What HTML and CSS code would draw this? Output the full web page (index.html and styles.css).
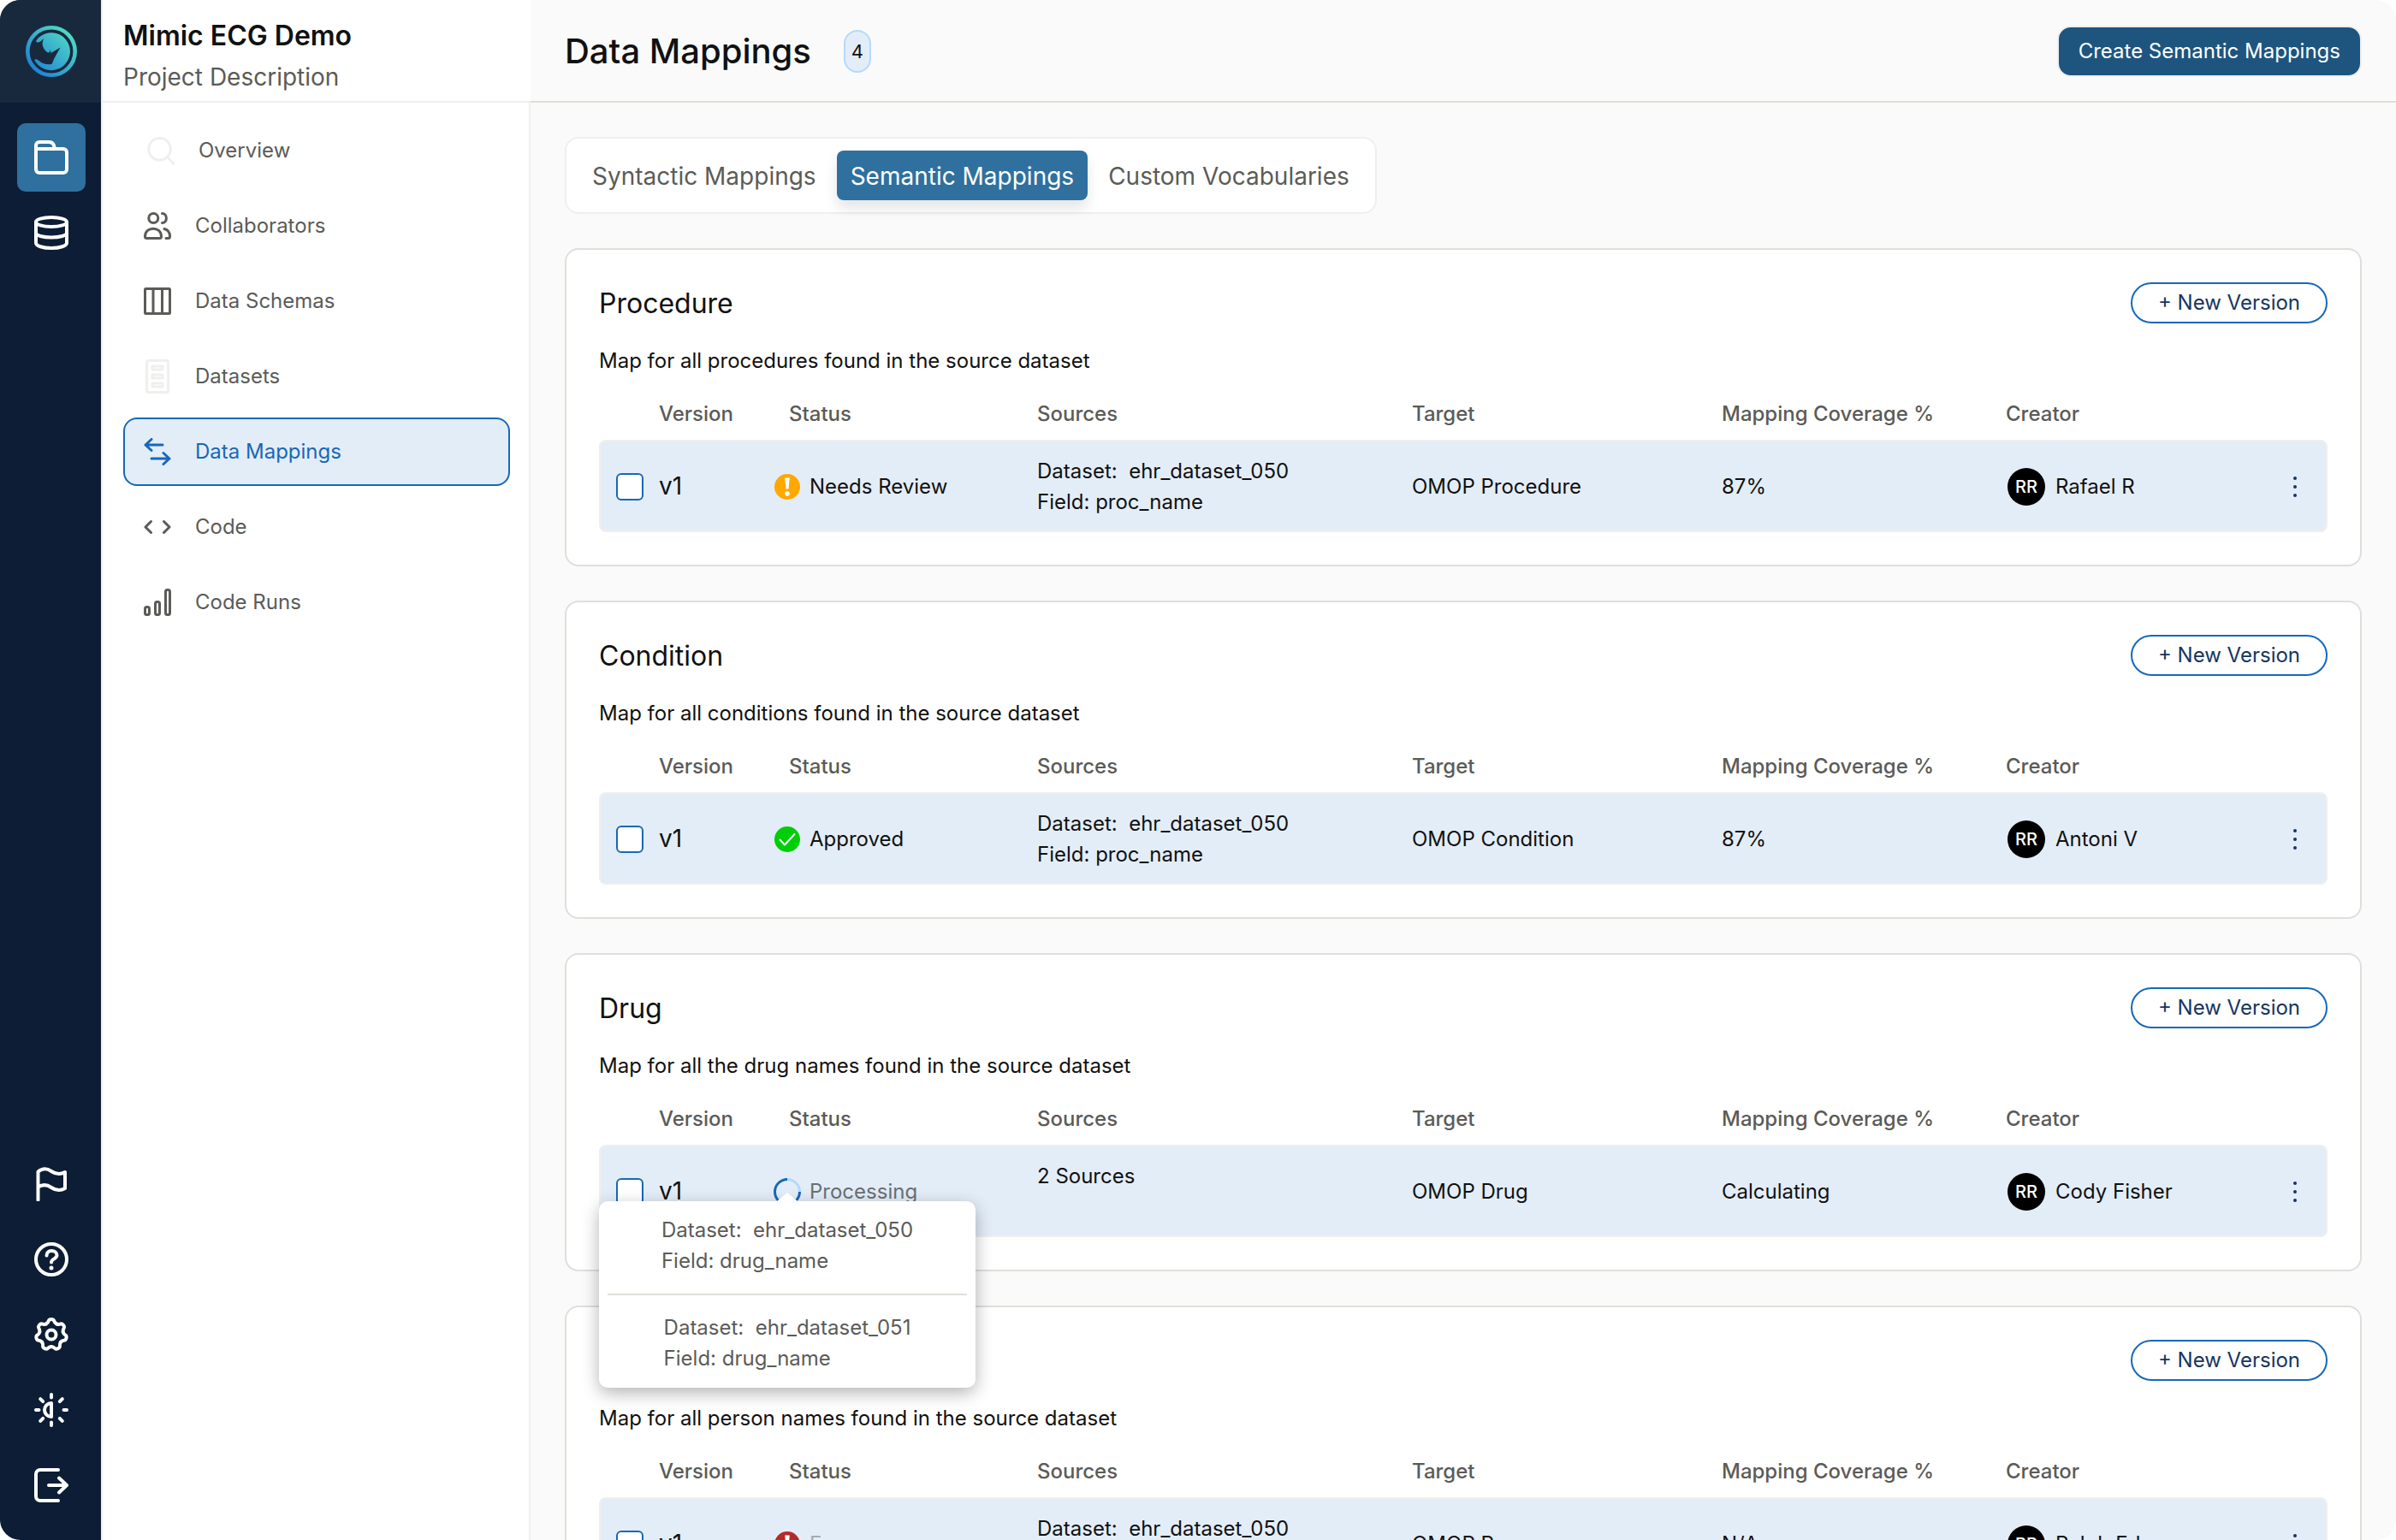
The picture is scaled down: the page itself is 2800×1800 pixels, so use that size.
FILE: index.html
```html
<!DOCTYPE html>
<html lang="en">
<head>
  <meta charset="UTF-8">
  <meta name="viewport" content="width=device-width, initial-scale=1.0">
  <title>Data Mappings</title>
  <link rel="stylesheet" href="styles.css">
</head>
<body>
<!-- shared icons -->
<svg class="sprite" aria-hidden="true">
  <symbol id="icon-dots" viewBox="0 0 32 32">
    <circle cx="16" cy="6" r="2" />
    <circle cx="16" cy="16" r="2" />
    <circle cx="16" cy="26" r="2" />
  </symbol>
</svg>

<div class="app">
  <nav class="rail" aria-label="Main">
    <div class="rail-logo">
      <svg width="60" height="60" viewBox="0 0 60 60">
        <defs>
          <linearGradient id="logo-gradient" x1="8" y1="52" x2="50" y2="8" gradientUnits="userSpaceOnUse">
            <stop offset="0" stop-color="#1f82d6" />
            <stop offset="1" stop-color="#50d8c2" />
          </linearGradient>
        </defs>
        <circle cx="30" cy="30" r="27.7" fill="none" stroke="url(#logo-gradient)" stroke-width="4.6" />
        <path fill="url(#logo-gradient)" d="M12 18 15 14A22 22 0 1 1 11.5 42.2Q9.500 39.500 11.500 39.200Q13.500 39 15.500 41Q22 46.500 30.500 45Q32 42 33 39L40.500 25.500 29.500 32 29 28Q28 32 26 31.500Q20 28 19.500 21L20.700 15Q18 19 15 19.500Q12.500 20 12 18Z" />
      </svg>
    </div>
    <div class="rail-group">
      <a class="rail-item active" href="#projects" aria-label="Projects">
        <svg viewBox="0 0 40 40">
          <path d="M2 12V6a4 4 0 0 1 4-4h11c3 0 5 1 6 4l1 4" />
          <path d="M2 10h32a4 4 0 0 1 4 4v20a4 4 0 0 1-4 4H6a4 4 0 0 1-4-4z" />
        </svg>
      </a>
      <a class="rail-item" href="#databases" aria-label="Databases">
        <svg viewBox="0 0 40 40">
          <ellipse cx="20" cy="7.500" rx="18" ry="5.500" />
          <path d="M2 8v24c0 3.300 8 6 18 6s18-2.700 18-6V8" />
          <path d="M2 20c0 3.300 8 5.500 18 5.500s18-2.200 18-5.500" />
        </svg>
      </a>
    </div>
    <div class="rail-group rail-bottom">
      <a class="rail-item" href="#flags" aria-label="Flags">
        <svg viewBox="0 0 40 40">
          <path d="M4.500 38.500V5.500C10 1 15 1.500 20 5s10 4.500 16 1v19c-6 3.500-11 2.500-16-1s-10-4-15.500-.5" />
        </svg>
      </a>
      <a class="rail-item" href="#help" aria-label="Help">
        <svg viewBox="0 0 40 40">
          <circle cx="20" cy="20" r="18" />
          <path d="M14.500 15.500c0-3.500 2.500-5.500 5.700-5.500s6.300 1.800 6.300 5.300c0 4.200-6.500 4-6.500 8.200" />
          <circle class="solid" cx="20" cy="30" r="2.500" />
        </svg>
      </a>
      <a class="rail-item" href="#settings" aria-label="Settings">
        <svg viewBox="0 0 40 40">
          <path id="tooth" d="M13.900 7.400C16 6.400 16.500 5 17 3.500 17.800 1.600 22.200 1.600 23 3.500 23.500 5 24 6.400 26.100 7.400" />
          <use href="#tooth" transform="rotate(51.430 20 20)" />
          <use href="#tooth" transform="rotate(102.860 20 20)" />
          <use href="#tooth" transform="rotate(154.290 20 20)" />
          <use href="#tooth" transform="rotate(205.710 20 20)" />
          <use href="#tooth" transform="rotate(257.140 20 20)" />
          <use href="#tooth" transform="rotate(308.570 20 20)" />
          <circle cx="20" cy="20" r="5.500" />
        </svg>
      </a>
      <a class="rail-item" href="#theme" aria-label="Theme">
        <svg viewBox="0 0 40 40">
          <path d="M20 12a8 8 0 0 0 0 16z" />
          <path d="M20 2v3.500M20 34.500V38M2 20h3.500M34.500 20H38M7.200 7.200l3 3M32.800 7.200l-3 3M7.200 32.800l3-3M32.800 32.800l-3-3" />
        </svg>
      </a>
      <a class="rail-item" href="#logout" aria-label="Log out">
        <svg viewBox="0 0 40 40">
          <path d="M28 2H7a5 5 0 0 0-5 5v26a5 5 0 0 0 5 5h21M17 20h20M29 11.500l9 8.500-9 8.500" />
        </svg>
      </a>
    </div>
  </nav>

  <aside class="sidebar">
    <div class="project">
      <div class="project-name">Mimic ECG Demo</div>
      <div class="project-desc">Project Description</div>
    </div>
    <nav class="menu" aria-label="Project">
      <a class="menu-item" href="#overview">
        <svg class="faded" width="36" height="36" viewBox="0 0 36 36"><circle cx="18.500" cy="16.300" r="12.800" /><path d="M28 26l7 7.500" /></svg>
        Overview
      </a>
      <a class="menu-item" href="#collaborators">
        <svg width="32" height="32" viewBox="0 0 32 32">
          <circle cx="11.300" cy="7" r="5.500" />
          <path d="M1.500 28.500C1.500 16 20.500 16 20.500 28.500a2 2 0 0 1-2 2h-15a2 2 0 0 1-2-2z" />
          <path d="M21.500 1.500c6.500 0 6.500 11 0 11M24 19.500c4.500 1 6.500 5 6.500 9 0 1.500-1 2-2 2H26" />
        </svg>
        Collaborators
      </a>
      <a class="menu-item" href="#schemas">
        <svg width="32" height="32" viewBox="0 0 32 32"><rect x="1.500" y="1.500" width="29" height="29" rx="1" /><path d="M11 2v28M21.500 2v28" /></svg>
        Data Schemas
      </a>
      <a class="menu-item" href="#datasets">
        <svg class="faded" width="32" height="40" viewBox="0 0 32 40"><rect x="3.500" y="1.500" width="25" height="37" rx="2" /><path d="M10 8h12v4H10zM10 18h12v4H10zM10 28h12v4H10z" /></svg>
        Datasets
      </a>
      <a class="menu-item active" href="#mappings" aria-current="page">
        <svg width="32" height="32" viewBox="0 0 32 32"><path d="M22 8H2M9 1.500L2 8l7 6.500M9 24h21M23 17.500l7 6.500-7 6.500" /></svg>
        Data Mappings
      </a>
      <a class="menu-item" href="#code">
        <svg width="32" height="32" viewBox="0 0 32 32"><path d="M8.500 9.500L2 16l6.500 6.500M23.500 9.500L30 16l-6.500 6.500" /></svg>
        Code
      </a>
      <a class="menu-item" href="#runs">
        <svg width="32" height="32" viewBox="0 0 32 32"><rect x="1.500" y="21.500" width="5" height="9" rx="2" /><rect x="13.500" y="15.500" width="5" height="15" rx="2" /><rect x="25.500" y="1.500" width="5" height="29" rx="2" /></svg>
        Code Runs
      </a>
    </nav>
  </aside>

  <main class="main">
    <header class="topbar">
      <h1>Data Mappings</h1>
      <span class="count">4</span>
      <button class="create-btn" type="button">Create Semantic Mappings</button>
    </header>

    <div class="content">
      <div class="tabs" role="tablist">
        <button class="tab" type="button" role="tab">Syntactic Mappings</button>
        <button class="tab active" type="button" role="tab" aria-selected="true">Semantic Mappings</button>
        <button class="tab" type="button" role="tab">Custom Vocabularies</button>
      </div>

      <section class="card">
        <div class="card-head">
          <h2>Procedure</h2>
          <button class="version-btn" type="button">+ New Version</button>
        </div>
        <p>Map for all procedures found in the source dataset</p>
        <table>
          <colgroup><col class="c-check"><col class="c-version"><col class="c-status"><col class="c-sources"><col class="c-target"><col class="c-coverage"><col class="c-creator"><col class="c-more"></colgroup>
          <thead>
            <tr><th></th><th>Version</th><th class="th-status">Status</th><th>Sources</th><th>Target</th><th>Mapping Coverage %</th><th>Creator</th><th></th></tr>
          </thead>
          <tbody>
            <tr>
              <td class="cell-check"><input type="checkbox" id="procedure-v1"></td>
              <td><label class="version" for="procedure-v1">v1</label></td>
              <td>
                <div class="status">
                  <svg viewBox="0 0 32 32"><circle cx="16" cy="16" r="15" fill="#ffa800" /><path fill="#fff" d="M13.200 5.500h5.600l-1.300 13h-3z" /><circle cx="16" cy="24" r="2.800" fill="#fff" /></svg>
                  Needs Review
                </div>
              </td>
              <td><div class="sources">Dataset:&nbsp; ehr_dataset_050<br>Field: proc_name</div></td>
              <td>OMOP Procedure</td>
              <td>87%</td>
              <td><div class="creator"><span class="avatar">RR</span>Rafael R</div></td>
              <td class="cell-more"><button class="more" type="button" aria-label="More"><svg><use href="#icon-dots" /></svg></button></td>
            </tr>
          </tbody>
        </table>
      </section>

      <section class="card">
        <div class="card-head">
          <h2>Condition</h2>
          <button class="version-btn" type="button">+ New Version</button>
        </div>
        <p>Map for all conditions found in the source dataset</p>
        <table>
          <colgroup><col class="c-check"><col class="c-version"><col class="c-status"><col class="c-sources"><col class="c-target"><col class="c-coverage"><col class="c-creator"><col class="c-more"></colgroup>
          <thead>
            <tr><th></th><th>Version</th><th class="th-status">Status</th><th>Sources</th><th>Target</th><th>Mapping Coverage %</th><th>Creator</th><th></th></tr>
          </thead>
          <tbody>
            <tr>
              <td class="cell-check"><input type="checkbox" id="condition-v1"></td>
              <td><label class="version" for="condition-v1">v1</label></td>
              <td>
                <div class="status">
                  <svg viewBox="0 0 32 32"><circle cx="16" cy="16" r="15" fill="#00ce07" /><path fill="none" stroke="#fff" stroke-width="2" stroke-linecap="round" stroke-linejoin="round" d="M7.500 16.500l5.500 6L24.500 10" /></svg>
                  Approved
                </div>
              </td>
              <td><div class="sources">Dataset:&nbsp; ehr_dataset_050<br>Field: proc_name</div></td>
              <td>OMOP Condition</td>
              <td>87%</td>
              <td><div class="creator"><span class="avatar">RR</span>Antoni V</div></td>
              <td class="cell-more"><button class="more" type="button" aria-label="More"><svg><use href="#icon-dots" /></svg></button></td>
            </tr>
          </tbody>
        </table>
      </section>

      <section class="card">
        <div class="card-head">
          <h2>Drug</h2>
          <button class="version-btn" type="button">+ New Version</button>
        </div>
        <p>Map for all the drug names found in the source dataset</p>
        <table>
          <colgroup><col class="c-check"><col class="c-version"><col class="c-status"><col class="c-sources"><col class="c-target"><col class="c-coverage"><col class="c-creator"><col class="c-more"></colgroup>
          <thead>
            <tr><th></th><th>Version</th><th class="th-status">Status</th><th>Sources</th><th>Target</th><th>Mapping Coverage %</th><th>Creator</th><th></th></tr>
          </thead>
          <tbody>
            <tr>
              <td class="cell-check"><input type="checkbox" id="drug-v1"></td>
              <td><label class="version" for="drug-v1">v1</label></td>
              <td class="has-popover">
                <div class="status processing">
                  <svg viewBox="0 0 32 32" fill="none" stroke-width="3"><path stroke="#b3d9ff" d="M16 1.500A14.500 14.500 0 0 1 30.500 16" /><path stroke="#1768b8" d="M30.500 16A14.500 14.500 0 1 1 16 1.500" /></svg>
                  Processing
                </div>
                <div class="popover">
                  <div class="popover-item"><span>Dataset:&nbsp; ehr_dataset_050<br>Field: drug_name</span></div>
                  <div class="popover-item"><span>Dataset:&nbsp; ehr_dataset_051<br>Field: drug_name</span></div>
                </div>
              </td>
              <td><div class="sources">2 Sources</div></td>
              <td>OMOP Drug</td>
              <td>Calculating</td>
              <td><div class="creator"><span class="avatar">RR</span>Cody Fisher</div></td>
              <td class="cell-more"><button class="more" type="button" aria-label="More"><svg><use href="#icon-dots" /></svg></button></td>
            </tr>
          </tbody>
        </table>
      </section>

      <section class="card">
        <div class="card-head">
          <h2>Person</h2>
          <button class="version-btn" type="button">+ New Version</button>
        </div>
        <p>Map for all person names found in the source dataset</p>
        <table>
          <colgroup><col class="c-check"><col class="c-version"><col class="c-status"><col class="c-sources"><col class="c-target"><col class="c-coverage"><col class="c-creator"><col class="c-more"></colgroup>
          <thead>
            <tr><th></th><th>Version</th><th class="th-status">Status</th><th>Sources</th><th>Target</th><th>Mapping Coverage %</th><th>Creator</th><th></th></tr>
          </thead>
          <tbody>
            <tr>
              <td class="cell-check"><input type="checkbox" id="person-v1"></td>
              <td><label class="version" for="person-v1">v1</label></td>
              <td>
                <div class="status error">
                  <svg viewBox="0 0 32 32"><circle cx="16" cy="16" r="15" fill="#b62a2a" /><path fill="#fff" d="M13.200 5.500h5.600l-1.300 13h-3z" /><circle cx="16" cy="24" r="2.800" fill="#fff" /></svg>
                  Error
                </div>
              </td>
              <td><div class="sources">Dataset:&nbsp; ehr_dataset_050<br>Field: person_name</div></td>
              <td>OMOP Person</td>
              <td>N/A</td>
              <td><div class="creator"><span class="avatar">RR</span>Ralph Edwa...</div></td>
              <td class="cell-more"><button class="more" type="button" aria-label="More"><svg><use href="#icon-dots" /></svg></button></td>
            </tr>
          </tbody>
        </table>
      </section>
    </div>
  </main>
</div>
</body>
</html>
```

FILE: styles.css
```css
* {
  box-sizing: border-box;
}

body {
  margin: 0;
  background: #ffffff;
  color: #111111;
  font-family: Inter, "Liberation Sans", sans-serif;
  font-size: 24px;
  line-height: 36px;
}

button {
  font: inherit;
  cursor: pointer;
}

a {
  color: inherit;
  text-decoration: none;
}

svg {
  display: block;
  flex-shrink: 0;
}

.sprite {
  display: none;
}

.app {
  display: flex;
  height: 100vh;
  overflow: hidden;
  border-radius: 24px;
  background: #fafafa;
}

/* Icon rail */

.rail {
  display: flex;
  flex-direction: column;
  flex-shrink: 0;
  width: 120px;
  border-right: 2px solid #efefed;
  background: #0c1d35;
}

.rail-logo {
  height: 120px;
  padding: 30px;
  background: #18293e;
}

.rail-group {
  display: flex;
  flex-direction: column;
  gap: 8px;
  padding: 24px 0 24px 20px;
}

.rail-bottom {
  margin-top: auto;
}

.rail-item {
  display: flex;
  align-items: center;
  justify-content: center;
  width: 80px;
  height: 80px;
  border-radius: 10px;
}

.rail-item.active {
  background: #2f709e;
}

.rail-item svg {
  width: 40px;
  height: 40px;
  fill: none;
  stroke: #ffffff;
  stroke-width: 4;
  stroke-linecap: round;
  stroke-linejoin: round;
}

.rail-item .solid {
  fill: #ffffff;
  stroke: none;
}

/* Project sidebar */

.sidebar {
  flex-shrink: 0;
  width: 500px;
  background: #ffffff;
}

.project {
  height: 120px;
  padding: 18px 24px 0;
  border-bottom: 2px solid #efefed;
}

.project-name {
  font-size: 32px;
  font-weight: 600;
  line-height: 48px;
}

.project-desc {
  color: #5b5b58;
  font-size: 28px;
  line-height: 48px;
}

.menu {
  display: flex;
  flex-direction: column;
  gap: 8px;
  height: calc(100% - 120px);
  padding: 16px 22px 16px 24px;
  border-right: 2px solid #efefed;
}

.menu-item {
  display: flex;
  align-items: center;
  gap: 28px;
  height: 80px;
  padding: 0 22px;
  border: 2px solid transparent;
  border-radius: 16px;
  color: #5b5b58;
}

.menu-item svg {
  fill: none;
  stroke: currentColor;
  stroke-width: 3;
  stroke-linecap: round;
  stroke-linejoin: round;
}

.menu-item svg.faded {
  stroke: #efefed;
}

.menu-item.active {
  border-color: #1768b8;
  background: #e3edf8;
  color: #1768b8;
}

/* Main area */

.main {
  display: flex;
  flex: 1;
  flex-direction: column;
  min-width: 0;
}

.topbar {
  display: flex;
  align-items: center;
  flex-shrink: 0;
  height: 120px;
  padding: 2px 40px 0;
  border-bottom: 2px solid #dfdfda;
}

h1 {
  margin: 0;
  font-size: 40px;
  font-weight: 500;
  line-height: 48px;
}

.count {
  margin-left: 38px;
  width: 32px;
  border: 2px solid #b3d9ff;
  border-radius: 16px;
  background: #e3edf8;
  font-size: 22px;
  line-height: 46px;
  text-align: center;
}

.create-btn {
  height: 60px;
  margin-left: auto;
  padding: 0 23px;
  border: 2px solid #efefed;
  border-radius: 16px;
  background: #1d557f;
  color: #ffffff;
}

.content {
  display: flex;
  flex: 1;
  flex-direction: column;
  gap: 40px;
  min-height: 0;
  padding: 40px;
  overflow-y: auto;
  scrollbar-width: none;
}

.tabs {
  display: flex;
  flex-shrink: 0;
  align-self: flex-start;
  gap: 8px;
  padding: 14px;
  border: 2px solid #efefed;
  border-radius: 16px;
  background: #ffffff;
}

.tab {
  height: 58px;
  padding: 2px 16px 0;
  border: none;
  border-radius: 8px;
  background: none;
  color: #5b5b58;
  font-size: 28px;
}

.tab.active {
  background: #2f709e;
  box-shadow: 0 10px 16px rgba(0, 0, 0, 0.1);
  color: #ffffff;
}

/* Mapping cards */

.card {
  flex-shrink: 0;
  padding: 38px;
  border: 2px solid #dfdfda;
  border-radius: 16px;
  background: #ffffff;
}

.card-head {
  display: flex;
  align-items: flex-start;
  justify-content: space-between;
  margin-bottom: 24px;
}

h2 {
  margin: 0;
  font-size: 32px;
  font-weight: 400;
  line-height: 50px;
}

.version-btn {
  width: 230px;
  height: 48px;
  padding: 0;
  border: 2px solid #1768b8;
  border-radius: 24px;
  background: #ffffff;
  color: #163560;
}

.card p {
  margin: 0;
}

table {
  width: 100%;
  table-layout: fixed;
  border-spacing: 0;
}

.c-check {
  width: 70px;
}

.c-version {
  width: 134px;
}

.c-status {
  width: 308px;
}

.c-sources {
  width: 438px;
}

.c-target {
  width: 362px;
}

.c-coverage {
  width: 332px;
}

.c-creator {
  width: 276px;
}

.c-more {
  width: 100px;
}

th {
  padding: 26px 0 12px;
  color: #5b5b58;
  font-weight: 500;
  text-align: left;
  white-space: nowrap;
}

.th-status {
  padding-left: 18px;
}

td {
  height: 108px;
  padding: 2px 0 0;
  border: solid #efefed;
  border-width: 2px 0;
  background: #e3edf8;
  white-space: nowrap;
}

td:first-child {
  border-left-width: 2px;
  border-radius: 8px 0 0 8px;
}

td:last-child {
  border-right-width: 2px;
  border-radius: 0 8px 8px 0;
}

.cell-check {
  padding-left: 18px;
}

input[type="checkbox"] {
  display: block;
  width: 32px;
  height: 32px;
  margin: 0;
  border: 2px solid #1768b8;
  border-radius: 6px;
  background: #ffffff;
  appearance: none;
}

.version {
  font-size: 28px;
}

.status {
  display: flex;
  align-items: center;
  gap: 10px;
}

.status svg {
  width: 32px;
  height: 32px;
}

.status.processing {
  color: #6b6f73;
}

.status.error {
  color: #a6abb0;
}

.sources {
  min-height: 72px;
}

.creator {
  display: flex;
  align-items: center;
  gap: 12px;
  padding-left: 2px;
}

.avatar {
  width: 44px;
  height: 44px;
  border-radius: 50%;
  background: #000000;
  color: #ffffff;
  font-size: 20px;
  font-weight: 500;
  line-height: 44px;
  text-align: center;
}

.cell-more {
  padding-right: 20px;
}

.more {
  display: block;
  width: 32px;
  height: 32px;
  margin-left: auto;
  padding: 0;
  border: none;
  background: none;
}

.more svg {
  width: 32px;
  height: 32px;
  fill: #163560;
}

/* Source list over the drug row */

.has-popover {
  position: relative;
}

.popover {
  position: absolute;
  top: 64px;
  left: -204px;
  z-index: 1;
  width: 440px;
  padding: 0 10px;
  border-radius: 10px;
  background: #ffffff;
  box-shadow: 0 6px 20px rgba(0, 0, 0, 0.3);
  color: #5b5b58;
}

.popover::before {
  content: "";
  position: absolute;
  top: -10px;
  left: 208px;
  border: solid transparent;
  border-width: 0 12px 10px;
  border-bottom-color: #ffffff;
}

.popover-item {
  display: flex;
  justify-content: center;
  padding: 16px 0 20px;
}

.popover-item + .popover-item {
  padding: 20px 0 16px;
  border-top: 2px solid #dfdfda;
}
```
